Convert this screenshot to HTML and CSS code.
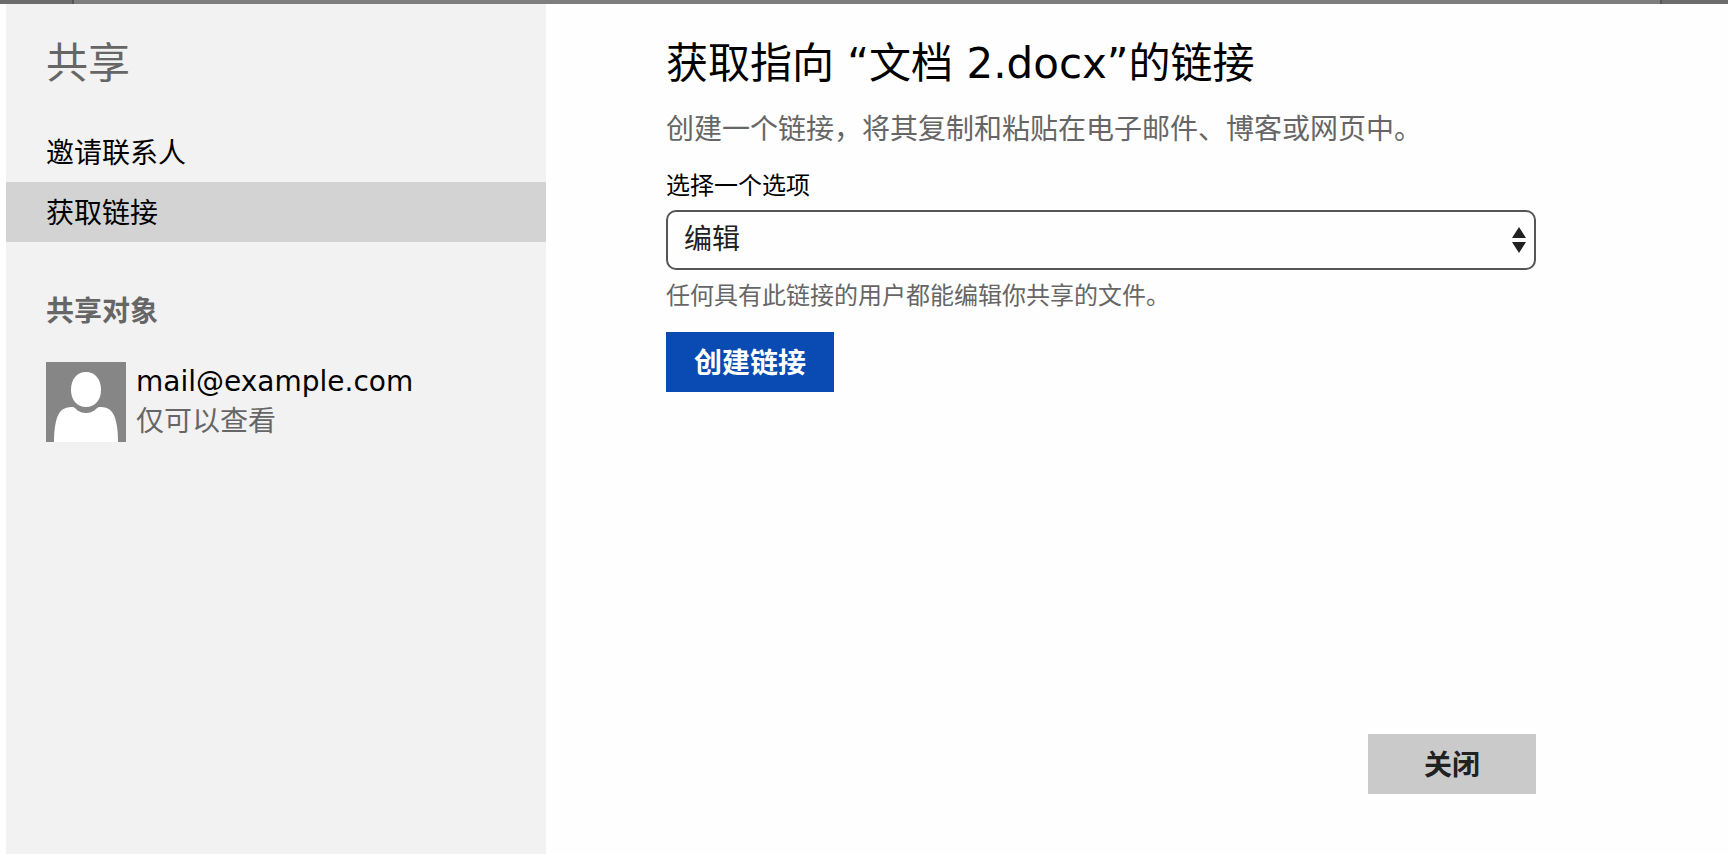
FILE: index.html
```
<!DOCTYPE html>
<html lang="zh-CN">
    <head>
        <meta charset="utf-8">
        <title>共享</title>
        <link rel="stylesheet" href="styles.css">
    </head>
    <body>
        <div class="page-edge">
            <span class="edge-left"></span>
            <span class="edge-middle"></span>
            <span class="edge-right"></span>
        </div>

        <div class="dialog">
            <aside class="sidebar">
                <h2>共享</h2>
                <nav>
                    <a href="#invite">邀请联系人</a>
                    <a href="#link" class="active" aria-current="page">获取链接</a>
                </nav>
                <h3>共享对象</h3>
                <div class="person">
                    <svg class="avatar" viewBox="0 0 80 80" aria-hidden="true">
                        <rect width="80" height="80" fill="#868686"/>
                        <path d="M8 80C8 66 10 55 14 50C17 46 22 45 27 45C30 46 32 51 40 51C48 51 50 46 53 45C59 45 63 46 66 50C70 55 72 66 72 80Z" fill="#fff"/>
                        <path d="M40 10C49 10 55 17 55 28C55 38 49 45 40 45C31 45 25 38 25 28C25 17 31 10 40 10Z" fill="#fff"/>
                    </svg>
                    <div>
                        <div class="person-name">mail@example.com</div>
                        <div class="person-role">仅可以查看</div>
                    </div>
                </div>
            </aside>

            <main class="content">
                <h1>获取指向 “文档 2.docx”的链接</h1>
                <p class="intro">创建一个链接，将其复制和粘贴在电子邮件、博客或网页中。</p>
                <label for="permission">选择一个选项</label>
                <div class="select-box">
                    <select id="permission">
                        <option>编辑</option>
                        <option>仅查看</option>
                    </select>
                    <svg class="arrows" viewBox="0 0 14 26" aria-hidden="true">
                        <path d="M7 0L14 11H0ZM0 15H14L7 26Z" fill="#212121"/>
                    </svg>
                </div>
                <p class="hint">任何具有此链接的用户都能编辑你共享的文件。</p>
                <button class="create-button">创建链接</button>
                <button class="close-button">关闭</button>
            </main>
        </div>
    </body>
</html>
```
FILE: styles.css
```
* { box-sizing: border-box; }
body {
    display: flex;
    flex-direction: column;
    min-height: 100vh;
    margin: 0;
    background: #fefefe;
    color: #000;
    font-family: "DejaVu Sans", "Noto Sans CJK SC", sans-serif;
    font-size: 28px;
    line-height: 40px;
}
h1, h2, h3, p { margin: 0; }
h1, h2 {
    font-size: 42px;
    font-weight: normal;
    line-height: 60px;
}
.page-edge {
    display: flex;
    height: 4px;
}
.edge-left, .edge-right { background: #6c6c6c; }
.edge-left { width: 72px; }
.edge-right { width: 66px; }
.edge-middle {
    flex: 1;
    background: #7e7e7e;
    border: solid #555;
    border-width: 0 2px;
}
.dialog {
    display: flex;
    flex: 1;
    padding-left: 6px;
}
.sidebar {
    width: 540px;
    padding-top: 30px;
    background: #f2f2f2;
}
.sidebar h2, .sidebar h3 {
    padding-left: 40px;
    color: #666;
}
.sidebar nav { margin: 28px 0 50px; }
.sidebar nav a {
    display: block;
    padding: 4px 0 0 40px;
    color: #000;
    line-height: 56px;
    text-decoration: none;
}
.sidebar nav a.active { background: #d3d3d3; }
.sidebar h3 {
    font-size: 28px;
    font-weight: 600;
}
.person {
    display: flex;
    gap: 10px;
    margin-top: 30px;
    padding-left: 40px;
}
.avatar {
    width: 80px;
    height: 80px;
}
.person-role { color: #666; }
.content {
    display: flex;
    flex: 1;
    flex-direction: column;
    align-items: flex-start;
    padding: 30px 192px 60px 120px;
}
.intro {
    margin-top: 16px;
    color: #666;
}
label {
    margin-top: 18px;
    font-size: 24px;
    line-height: 36px;
}
.select-box {
    position: relative;
    width: 100%;
    margin-top: 6px;
}
select {
    display: block;
    width: 100%;
    height: 60px;
    padding: 0 40px 0 16px;
    appearance: none;
    background: #fefefe;
    border: 2px solid #555;
    border-radius: 10px;
    color: #212121;
    font: inherit;
}
.arrows {
    position: absolute;
    top: 17px;
    right: 10px;
    width: 14px;
    height: 26px;
    pointer-events: none;
}
.hint {
    margin-top: 8px;
    color: #666;
    font-size: 24px;
    line-height: 36px;
}
button {
    min-width: 168px;
    height: 60px;
    padding: 4px 28px 0;
    border: none;
    font: inherit;
    font-weight: 600;
    cursor: pointer;
}
.create-button {
    margin-top: 18px;
    background: #0a4ab3;
    color: #fff;
}
.close-button {
    align-self: flex-end;
    margin-top: auto;
    background: #cacaca;
    color: #212121;
}
```
